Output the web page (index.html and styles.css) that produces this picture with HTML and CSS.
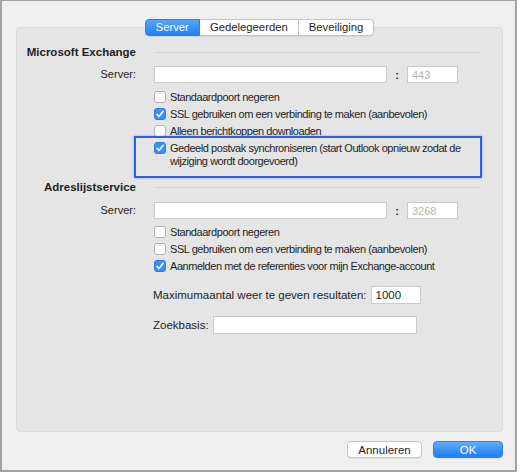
FILE: index.html
```html
<!DOCTYPE html>
<html lang="nl">
<head>
    <meta charset="UTF-8">
    <title>Accountinstellingen - Geavanceerd</title>
    <link rel="stylesheet" href="styles.css">
</head>
<body>
    <div class="window">
        <div class="tabs">
            <div class="tab active">Server</div>
            <div class="tab">Gedelegeerden</div>
            <div class="tab">Beveiliging</div>
        </div>

        <div class="panel">
            <div class="form">
                <div class="section-title">Microsoft Exchange</div>
                <div class="rule"></div>

                <label class="field-label gap-1">Server:</label>
                <div class="field gap-1">
                    <input class="text-input server-input" type="text">
                    <span class="colon">:</span>
                    <input class="text-input port-input" type="text" placeholder="443">
                </div>

                <div class="check-row gap-4"><span class="check"></span>Standaardpoort negeren</div>
                <div class="check-row"><span class="check on"></span>SSL gebruiken om een verbinding te maken (aanbevolen)</div>
                <div class="check-row"><span class="check"></span>Alleen berichtkoppen downloaden</div>
                <div class="check-row focused"><span class="check on"></span><span>Gedeeld postvak synchroniseren (start Outlook opnieuw zodat de wijziging wordt doorgevoerd)</span></div>

                <div class="section-title gap-7">Adreslijstservice</div>
                <div class="rule gap-7"></div>

                <label class="field-label gap-2">Server:</label>
                <div class="field gap-2">
                    <input class="text-input server-input" type="text">
                    <span class="colon">:</span>
                    <input class="text-input port-input" type="text" placeholder="3268">
                </div>

                <div class="check-row gap-3"><span class="check"></span>Standaardpoort negeren</div>
                <div class="check-row"><span class="check"></span>SSL gebruiken om een verbinding te maken (aanbevolen)</div>
                <div class="check-row"><span class="check on"></span>Aanmelden met de referenties voor mijn Exchange-account</div>

                <div class="inline-field gap-9">
                    <span>Maximumaantal weer te geven resultaten:</span>
                    <input class="text-input max-input" type="text" value="1000">
                </div>
                <div class="inline-field gap-8">
                    <span>Zoekbasis:</span>
                    <input class="text-input base-input" type="text">
                </div>
            </div>
        </div>

        <div class="buttons">
            <button class="btn">Annuleren</button>
            <button class="btn primary">OK</button>
        </div>
    </div>
</body>
</html>
```

FILE: styles.css
```css
body {
    margin: 0;
    background-color: #ffffff;
    font-family: "Liberation Sans", Arial, sans-serif;
    font-size: 11px;
    color: #1e1e1e;
}
.window {
    width: 513px;
    height: 469px;
    background-color: #efefef;
    border: 2px solid #a2a2a2;
    border-top-width: 1px;
}

/* segmented control on top of the panel */
.tabs {
    position: relative;
    z-index: 1;
    display: flex;
    justify-content: center;
    margin-top: 18px;
    margin-bottom: -9px;
    margin-left: 2px;
}
.tab {
    height: 15px;
    line-height: 15px;
    padding: 0 10px;
    font-size: 11.3px;
    background-color: #ffffff;
    border: 1px solid #c4c4c4;
    border-left: none;
    box-shadow: 0 1px 0 rgba(0, 0, 0, 0.06);
}
.tab:first-child {
    border-left: 1px solid #c4c4c4;
    border-radius: 4px 0 0 4px;
}
.tab:last-child {
    border-radius: 0 4px 4px 0;
}
.tab.active {
    color: #fff;
    background: linear-gradient(#55a6fb, #1f80f6);
    border-color: #2a7ef0;
}

.panel {
    height: 387px;
    margin: 0 12px 0 14px;
    padding-top: 16px;
    background-color: #e5e5e5;
    border: 1px solid #dadada;
    border-radius: 4px;
}

.form {
    display: grid;
    grid-template-columns: 119px 326px;
    column-gap: 18px;
    row-gap: 4px;
    align-items: center;
}
.section-title {
    grid-column: 1;
    text-align: right;
    font-weight: bold;
    font-size: 11.5px;
    line-height: 17px;
    white-space: nowrap;
}
.rule {
    grid-column: 2;
    height: 1px;
    background-color: #d3d3d3;
}
.field-label {
    grid-column: 1;
    text-align: right;
    line-height: 17px;
}
.field {
    grid-column: 2;
    display: flex;
    align-items: center;
}
.text-input {
    box-sizing: border-box;
    height: 17px;
    margin: 0;
    padding: 0 4px;
    font-family: inherit;
    font-size: 11px;
    color: #1e1e1e;
    background-color: #fff;
    border: 1px solid #cacaca;
    border-radius: 0;
    outline: none;
}
.text-input::placeholder {
    color: #b4b4b4;
}
.server-input {
    width: 233px;
}
.colon {
    width: 20px;
    text-align: center;
    font-weight: bold;
}
.port-input {
    width: 51px;
}

.check-row {
    grid-column: 2;
    display: flex;
    align-items: flex-start;
    line-height: 13px;
    letter-spacing: -0.45px;
}
.check {
    flex: none;
    box-sizing: border-box;
    width: 12px;
    height: 12px;
    margin-right: 4px;
    background-color: #fff;
    border: 1px solid #b3b3b3;
    border-radius: 3px;
}
.check.on {
    border-color: #2a7ef0;
    background: #3b8ff8 url("data:image/svg+xml,%3Csvg xmlns='http://www.w3.org/2000/svg' viewBox='0 0 12 12'%3E%3Cpath d='M3 6.3 5 8.4 9 3.4' fill='none' stroke='%23fff' stroke-width='1.6' stroke-linecap='round' stroke-linejoin='round'/%3E%3C/svg%3E") center / 12px 12px no-repeat;
}
/* keyboard focus ring drawn round the shared-mailbox option */
.check-row.focused {
    position: relative;
}
.check-row.focused::after {
    content: "";
    position: absolute;
    top: -6px;
    right: -2px;
    bottom: -10px;
    left: -20px;
    border: 2px solid #2a5ef3;
    box-shadow: 0 0 2px rgba(42, 94, 243, 0.5);
}

.inline-field {
    grid-column: 2;
    display: flex;
    align-items: center;
    gap: 4px;
    margin-left: -1px;
    font-size: 11.5px;
}
.max-input {
    width: 50px;
    height: 18px;
    font-size: 11.5px;
}
.base-input {
    width: 204px;
    height: 18px;
}

.gap-1 { margin-top: 1px; }
.gap-2 { margin-top: 2px; }
.gap-3 { margin-top: 3px; }
.gap-4 { margin-top: 4px; }
.gap-7 { margin-top: 7px; }
.gap-8 { margin-top: 8px; }
.gap-9 { margin-top: 9px; }

.buttons {
    display: flex;
    justify-content: flex-end;
    gap: 11px;
    margin: 9px 12px 0 0;
}
.btn {
    height: 17px;
    padding: 0;
    font-family: inherit;
    font-size: 11.5px;
    color: #1e1e1e;
    background-color: #fff;
    border: 1px solid #c6c6c6;
    border-radius: 4px;
    box-shadow: 0 1px 0 rgba(0, 0, 0, 0.05);
    width: 75px;
}
.btn.primary {
    width: 70px;
    color: #fff;
    background: linear-gradient(#62adfc, #1b7df6);
    border-color: #2b7ff1;
}
```
